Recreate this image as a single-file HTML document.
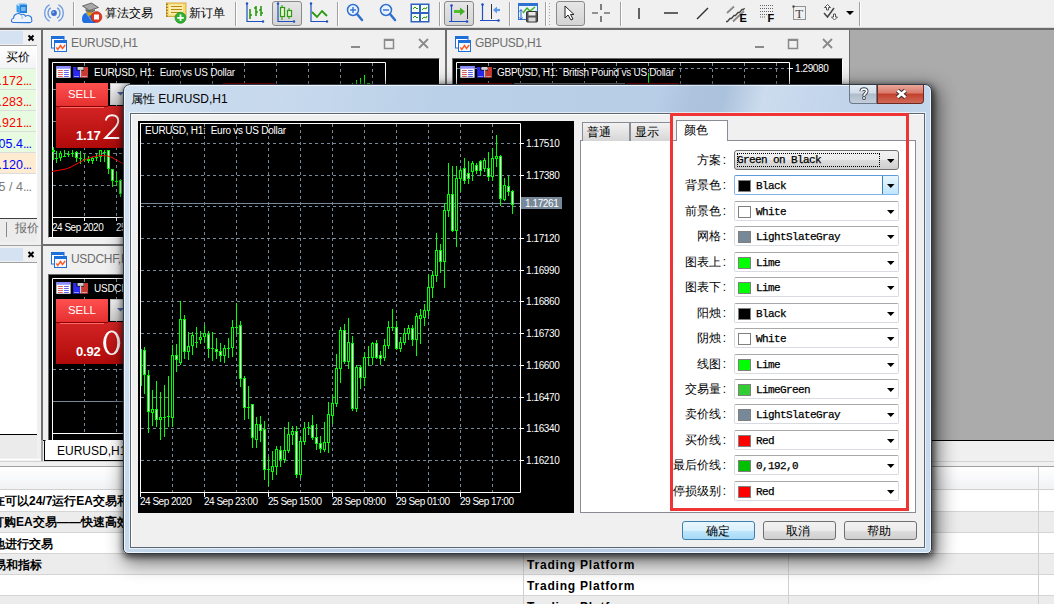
<!DOCTYPE html><html><head><meta charset="utf-8"><style>
*{margin:0;padding:0;box-sizing:border-box}
html,body{width:1054px;height:604px;overflow:hidden;background:#f0f0f0;font-family:"Liberation Sans",sans-serif;font-size:12px;color:#000;position:relative}
.a{position:absolute}
.t{white-space:nowrap;line-height:1}
svg{position:absolute;overflow:visible}
.mono{font-family:"Liberation Mono",monospace}
</style></head><body>
<div class="a" style="left:0px;top:0px;width:1054px;height:28px;background:#f0f0f0"></div>
<div class="a" style="left:0px;top:27px;width:1054px;height:1px;background:#d8d8d8"></div>
<div class="a" style="left:0px;top:28px;width:1054px;height:2px;background:#6b6b6b"></div>
<div class="a" style="left:73px;top:2px;width:1px;height:24px;background:#a0a0a0"></div>
<div class="a" style="left:74px;top:2px;width:1px;height:24px;background:#ffffff"></div>
<div class="a" style="left:235px;top:2px;width:1px;height:24px;background:#a0a0a0"></div>
<div class="a" style="left:236px;top:2px;width:1px;height:24px;background:#ffffff"></div>
<div class="a" style="left:337px;top:2px;width:1px;height:24px;background:#a0a0a0"></div>
<div class="a" style="left:338px;top:2px;width:1px;height:24px;background:#ffffff"></div>
<div class="a" style="left:439px;top:2px;width:1px;height:24px;background:#a0a0a0"></div>
<div class="a" style="left:440px;top:2px;width:1px;height:24px;background:#ffffff"></div>
<div class="a" style="left:509px;top:2px;width:1px;height:24px;background:#a0a0a0"></div>
<div class="a" style="left:510px;top:2px;width:1px;height:24px;background:#ffffff"></div>
<div class="a" style="left:620px;top:2px;width:1px;height:24px;background:#a0a0a0"></div>
<div class="a" style="left:621px;top:2px;width:1px;height:24px;background:#ffffff"></div>
<div class="a" style="left:859px;top:2px;width:1px;height:24px;background:#a0a0a0"></div>
<div class="a" style="left:860px;top:2px;width:1px;height:24px;background:#ffffff"></div>
<div class="a" style="left:545px;top:2px;width:1px;height:24px;background:#a0a0a0"></div>
<div class="a" style="left:546px;top:2px;width:1px;height:24px;background:#ffffff"></div>
<div class="a" style="left:549px;top:3px;width:1px;height:22px;background:repeating-linear-gradient(#a8a8a8 0 1px,transparent 1px 3px)"></div>
<div class="a" style="left:272px;top:1px;width:30px;height:25px;border:1px solid #8a8a8a;border-radius:3px;background:linear-gradient(#e6e6e6,#d4d4d4)"></div>
<div class="a" style="left:444px;top:1px;width:30px;height:25px;border:1px solid #8a8a8a;border-radius:3px;background:linear-gradient(#e6e6e6,#d4d4d4)"></div>
<div class="a" style="left:556px;top:1px;width:29px;height:25px;border:1px solid #8a8a8a;border-radius:3px;background:linear-gradient(#e6e6e6,#d4d4d4)"></div>
<svg class="a" style="left:0;top:0" width="1054" height="28" viewBox="0 0 1054 28"><path d="M16.5 4.5 L19 3.2 L27 3.2 L24.5 4.5 Z" fill="#8ccaf8"/><path d="M16.5 4.5 L19.5 6.5 L19.5 13 L16.5 12 Z" fill="#3aa0f0"/><rect x="19.5" y="4.5" width="7.5" height="8.5" fill="#1f80e0"/><path d="M21 8h4.5M21 10h4.5" stroke="#d8f0ff" stroke-width="1"/><path d="M13.5 22.5 C10.5 22.5 10.8 18.6 13.6 18.2 C13.4 13.8 18.6 12.4 21 14.6 C22.6 13.6 25 14.6 25.4 16.2 C28.2 14.6 32.2 16.4 31.6 19.6 C32.6 21.4 31.2 22.6 29.6 22.6 Z" fill="#eef4fc" stroke="#2d78d8" stroke-width="1.1"/><path d="M21 14.6 C22 15.5 22.5 17 22 19" fill="none" stroke="#7aa8e0" stroke-width="0.8"/><path d="M58.37 21.21 A9.3 9.3 0 0 0 58.37 4.79 M49.63 4.79 A9.3 9.3 0 0 0 49.63 21.21 M57.18 18.09 A6.0 6.0 0 0 0 57.18 7.91 M50.82 7.91 A6.0 6.0 0 0 0 50.82 18.09 " fill="none" stroke="#6b9ae0" stroke-width="1.3"/><circle cx="54" cy="13" r="2.9" fill="#3a6fd0"/><circle cx="53.3" cy="12.3" r="1" fill="#9cc0f0"/><path d="M82 19 C82 14 85 12.5 88 12.5 L92 13 C95 14 96 18 95.5 23 L84 23 C82.5 22.5 82 21 82 19Z" fill="#1f6fe0"/><path d="M86 13 L92 21" stroke="#6a98d8" stroke-width="1.2"/><path d="M86 10 L93 10 L92 15 L88 16 Z" fill="#d4a818"/><path d="M85.5 8.5 Q90 12.5 95 9 L95 11 Q90 14 85.5 11 Z" fill="#707070"/><path d="M82.5 6 L91.5 3 L98.5 7.5 L89.5 10.5 Z" fill="#a8a8a8" stroke="#505050" stroke-width="0.8"/><circle cx="96.5" cy="17" r="5.4" fill="#e0381c"/><circle cx="96.5" cy="17" r="5.4" fill="none" stroke="#b02010" stroke-width="0.6"/><rect x="94" y="14.5" width="5" height="5" fill="#fff"/><rect x="166.5" y="3" width="19.5" height="13.5" fill="#f8dc78" stroke="#d0a020" stroke-width="0.8"/><rect x="169" y="4.5" width="14" height="10" fill="#fcecb0"/><path d="M171 6.5h11M171 9.5h11M171 12.5h8" stroke="#b88a10" stroke-width="1.2"/><path d="M166 4.3h2M166 7.3h2M166 10.3h2M166 13.3h2M166 16h2" stroke="#8a6a10" stroke-width="1.1"/><circle cx="180.5" cy="17.8" r="5.5" fill="#30b030"/><circle cx="180.5" cy="17.8" r="5.5" fill="none" stroke="#1a8a1a" stroke-width="0.7"/><path d="M177.2 17.8h6.6M180.5 14.5v6.6" stroke="#fff" stroke-width="1.8"/><path d="M247 3 V21.5 H263" fill="none" stroke="#1f4fc0" stroke-width="1.2"/><circle cx="247" cy="3.5" r="1.2" fill="#1f4fc0"/><circle cx="263" cy="21.5" r="1.2" fill="#1f4fc0"/><path d="M250 9v10M250 15h2M256 6v10M254 8h2M256 12h2M261 6v10M259 10h2M261 13h2" stroke="#2a9a10" stroke-width="1.6" fill="none"/><path d="M278 3 V21.5 H294" fill="none" stroke="#1f4fc0" stroke-width="1.2"/><circle cx="278" cy="3.5" r="1.2" fill="#1f4fc0"/><circle cx="294" cy="21.5" r="1.2" fill="#1f4fc0"/><path d="M282 5v15M289 8v11" stroke="#2a9a10" stroke-width="1"/><rect x="280.5" y="7.5" width="4" height="9" fill="#e8f5d0" stroke="#2a9a10" stroke-width="1.2"/><rect x="287.5" y="10.5" width="4" height="6" fill="#e8f5d0" stroke="#2a9a10" stroke-width="1.2"/><path d="M311 3 V21.5 H327" fill="none" stroke="#1f4fc0" stroke-width="1.2"/><circle cx="311" cy="3.5" r="1.2" fill="#1f4fc0"/><circle cx="327" cy="21.5" r="1.2" fill="#1f4fc0"/><path d="M312 12 L317 17 L322 11 L327 16" fill="none" stroke="#2a9a10" stroke-width="1.8"/><circle cx="353" cy="10" r="5.5" fill="#eaf3ff" stroke="#2f6fd0" stroke-width="1.5"/><path d="M357 14 L362 20" stroke="#2f6fd0" stroke-width="2.5" stroke-linecap="round"/><path d="M350 10h6" stroke="#2f6fd0" stroke-width="1.4"/><path d="M353 7v6" stroke="#2f6fd0" stroke-width="1.4"/><circle cx="386" cy="10" r="5.5" fill="#eaf3ff" stroke="#2f6fd0" stroke-width="1.5"/><path d="M390 14 L395 20" stroke="#2f6fd0" stroke-width="2.5" stroke-linecap="round"/><path d="M383 10h6" stroke="#2f6fd0" stroke-width="1.4"/><rect x="410.5" y="3.5" width="19" height="19" fill="#2f62c0"/><rect x="412" y="5" width="7" height="7" fill="#f4fff0"/><rect x="421" y="5" width="7" height="7" fill="#f4fff0"/><rect x="412" y="14" width="7" height="7" fill="#f4fff0"/><rect x="421" y="14" width="7" height="7" fill="#f4fff0"/><path d="M413 9l2-2 2 2 1-1M422 10l2-2 2 1 1-2M413 18l2-2 2 2 1-1M422 19l2-2 2 1 1-2" stroke="#2a9a10" fill="none" stroke-width="1"/><path d="M451.5 5.5V22M449 21.5H467" stroke="#1f4fc0" stroke-width="1.2"/><circle cx="451.5" cy="5.5" r="1.3" fill="#1f4fc0"/><circle cx="467" cy="21.5" r="1.3" fill="#1f4fc0"/><path d="M467.5 5V19" stroke="#333" stroke-width="1"/><path d="M454 11.5h7" stroke="#50c030" stroke-width="3"/><path d="M460 7.5 L465 11.5 L460 15.5 Z" fill="#40b020"/><path d="M482.5 4.5V21M480 20.5H499" stroke="#1f4fc0" stroke-width="1.2"/><circle cx="482.5" cy="4.5" r="1.3" fill="#1f4fc0"/><circle cx="498.5" cy="20.5" r="1.3" fill="#1f4fc0"/><path d="M491.5 4V19" stroke="#333" stroke-width="1"/><path d="M495 10h5" stroke="#5a9ae8" stroke-width="2.2"/><path d="M497 6.5 L493 10 L497 13.5 Z" fill="#5a9ae8"/><rect x="518.5" y="3.5" width="19" height="16" fill="#eaf4ff" stroke="#2f72d0" stroke-width="1"/><rect x="518.5" y="3.5" width="19" height="2.5" fill="#2f72d0"/><path d="M521 10v9M519.5 11.5l1.5-2 1.5 2M519.5 17.5l1.5 2 1.5-2" stroke="#2f62c0" fill="none" stroke-width="1"/><path d="M523 13 l4-5 3 3 5-4" stroke="#40b020" fill="none" stroke-width="1.5"/><rect x="526.5" y="11.5" width="11" height="10.5" rx="1" fill="#555" stroke="#333" stroke-width="1"/><rect x="528.5" y="12" width="7" height="3.5" fill="#e8e8e8"/><rect x="528.5" y="17.5" width="7" height="4" fill="#d8d8d8"/><path d="M565 6 L565 18 L568 15 L571 20 L573 19 L570.5 14.5 L574 14.5 Z" fill="#fff" stroke="#222" stroke-width="1"/><path d="M601 4v6M601 16v6M592 13h6M604 13h6" stroke="#333" stroke-width="1.2"/><path d="M639 8v11" stroke="#333" stroke-width="1.5"/><path d="M664 13h14" stroke="#333" stroke-width="1.5"/><path d="M697 19 L708 8" stroke="#333" stroke-width="1.5"/><path d="M726 21.5 h1.5 l2.5-3 h1.5 l2.5-3 h1.5 l2.5-3 h1.5 l2.5-3 h1.5 l1-1.5" fill="none" stroke="#444" stroke-width="1.3"/><path d="M727 13 L734 6.5 M733 21.5 L744 11" stroke="#8a8a8a" stroke-width="1.8"/><text x="739.5" y="22" font-family="Liberation Sans" font-weight="bold" font-size="11" fill="#000">E</text><path d="M760 5.5h13M760 8.5h13M760 11.5h13M760 14.5h13" stroke="#666" stroke-width="1" stroke-dasharray="1 1"/><path d="M760 17h6" stroke="#666" stroke-width="1" stroke-dasharray="1 1"/><text x="767.5" y="22" font-family="Liberation Sans" font-weight="bold" font-size="11" fill="#000">F</text><rect x="793.5" y="6.5" width="12" height="13" fill="none" stroke="#333" stroke-dasharray="1 1"/><rect x="792.5" y="5.5" width="2" height="2" fill="#333"/><text x="795.3" y="18" font-family="Liberation Serif" font-size="13" fill="#444">T</text><path d="M824 13 l3.5 4 L834 8" stroke="#444" fill="none" stroke-width="1.5"/><path d="M826.5 10 v-2.5 h-2 l3-3 3 3 h-2 v2.5z" fill="#fff" stroke="#444" stroke-width="0.9"/><path d="M833.5 14 v3 h-2 l3 3 3-3 h-2 v-3z" fill="#fff" stroke="#444" stroke-width="0.9"/><path d="M846 11 h8 l-4 4z" fill="#000"/></svg>
<div class="a t" style="left:105px;top:7px;font-size:12px;font-weight:500">算法交易</div>
<div class="a t" style="left:189px;top:7px;font-size:12px;font-weight:500">新订单</div>
<div class="a" style="left:0px;top:30px;width:41px;height:431px;background:#f0f0f0"></div>
<div class="a" style="left:41px;top:30px;width:2px;height:410px;background:#6e6e6e"></div>
<div class="a" style="left:0px;top:31px;width:23px;height:13px;background:#d4e2f1"></div>
<svg class="a" style="left:0;top:0" width="41" height="300"><path d="M28.5 35.5 L33.5 40.5 M33.5 35.5 L28.5 40.5" stroke="#000" stroke-width="2"/></svg>
<div class="a" style="left:0px;top:45px;width:37px;height:1px;background:#a0a0a0"></div>
<div class="a" style="left:0px;top:46px;width:37px;height:172px;background:#fff"></div>
<div class="a" style="left:0px;top:46px;width:36px;height:23px;background:linear-gradient(#ffffff,#f3f4f6);border-bottom:1px solid #e3e3e3"></div>
<div class="a t" style="left:6px;top:51px;font-size:12px">买价</div>
<div class="a" style="left:0px;top:69px;width:36px;height:21px;background:#e6fbe0;border-bottom:1px solid #dcdcdc"></div>
<div class="a t" style="right:1022.5px;top:75px;color:#ff0000;font-size:12.5px">1.172<span style="letter-spacing:-0.6px">...</span></div>
<div class="a" style="left:0px;top:90px;width:36px;height:21px;background:#e6fbe0;border-bottom:1px solid #dcdcdc"></div>
<div class="a t" style="right:1022.5px;top:96px;color:#ff0000;font-size:12.5px">1.283<span style="letter-spacing:-0.6px">...</span></div>
<div class="a" style="left:0px;top:111px;width:36px;height:21px;background:#e6fbe0;border-bottom:1px solid #dcdcdc"></div>
<div class="a t" style="right:1022.5px;top:117px;color:#ff0000;font-size:12.5px">0.921<span style="letter-spacing:-0.6px">...</span></div>
<div class="a" style="left:0px;top:132px;width:36px;height:21px;background:#e6fbe0;border-bottom:1px solid #dcdcdc"></div>
<div class="a t" style="right:1022.5px;top:138px;color:#0000ff;font-size:12.5px">105.4<span style="letter-spacing:-0.6px">...</span></div>
<div class="a" style="left:0px;top:153px;width:36px;height:21px;background:#fdebd2;border-bottom:1px solid #dcdcdc"></div>
<div class="a t" style="right:1022.5px;top:159px;color:#0000ff;font-size:12.5px">1.120<span style="letter-spacing:-0.6px">...</span></div>
<div class="a" style="left:0px;top:175px;width:36px;height:21px;background:#ffffff;"></div>
<div class="a t" style="right:1022.5px;top:181px;color:#7a7a7a;font-size:12.5px">5 / 4<span style="letter-spacing:-0.6px">...</span></div>
<div class="a" style="left:0px;top:218px;width:37px;height:1px;background:#404040"></div>
<div class="a" style="left:0px;top:219px;width:37px;height:23px;background:#ececec"></div>
<div class="a" style="left:6px;top:222px;width:1px;height:15px;background:#8a8a8a"></div>
<div class="a t" style="left:15px;top:222px;font-size:12px;color:#6a6a6a">报价</div>
<div class="a" style="left:0px;top:245px;width:41px;height:1px;background:#a0a0a0"></div>
<div class="a" style="left:0px;top:248px;width:23px;height:13px;background:#d4e2f1"></div>
<svg class="a" style="left:0;top:0" width="41" height="300"><path d="M28.5 252 L33.5 257 M33.5 252 L28.5 257" stroke="#000" stroke-width="2"/></svg>
<div class="a" style="left:0px;top:262px;width:37px;height:1px;background:#a0a0a0"></div>
<div class="a" style="left:0px;top:263px;width:37px;height:171px;background:#fff"></div>
<div class="a" style="left:0px;top:434px;width:37px;height:1px;background:#000"></div>
<div class="a" style="left:0px;top:435px;width:37px;height:23px;background:#ebebeb"></div>
<div class="a" style="left:0px;top:461px;width:43px;height:1px;background:#a0a0a0"></div>
<div class="a" style="left:43px;top:30px;width:1011px;height:410px;background:#ababab"></div>
<div class="a" style="left:43px;top:440px;width:1011px;height:1px;background:#000"></div>
<div class="a" style="left:43px;top:30px;width:402px;height:214px;background:#f0f0f0"></div>
<svg class="a" style="left:51px;top:36px" width="17" height="17" viewBox="0 0 17 17"><rect x="0.5" y="0.5" width="12.5" height="11.5" fill="#fff" stroke="#1e6fd9"/><rect x="0.5" y="0.5" width="12.5" height="2.5" fill="#1e6fd9"/><rect x="3.5" y="4.5" width="12" height="11" fill="#f4f8ff" stroke="#1e6fd9"/><rect x="3.5" y="4.5" width="12" height="2.5" fill="#1e6fd9"/><path d="M5.3 11.3 L6.8 13.5 L9.5 9.5 L11.5 12.5 L14.2 9" stroke="#ff5a1e" stroke-width="1.4" fill="none"/></svg>
<div class="a t" style="left:71px;top:37px;font-size:12px;color:#6d6d6d;letter-spacing:-0.3px">EURUSD,H1</div>
<svg class="a" style="left:345px;top:30px" width="100" height="28"><path d="M6 17h9" stroke="#8a8a8a" stroke-width="2"/><rect x="39.5" y="9.5" width="9" height="9" fill="none" stroke="#8a8a8a" stroke-width="1.5"/><path d="M39 10h10" stroke="#8a8a8a" stroke-width="2"/><path d="M74 9 L83 18 M83 9 L74 18" stroke="#8a8a8a" stroke-width="1.8"/></svg>
<div class="a" style="left:445px;top:30px;width:2px;height:216px;background:#6e6e6e"></div>
<div class="a" style="left:43px;top:244px;width:404px;height:2px;background:#6e6e6e"></div>
<div class="a" style="left:48px;top:58px;width:392px;height:180px;background:#000;border-top:1px solid #6a6a6a;border-left:1px solid #6a6a6a;border-right:1px solid #fff;border-bottom:1px solid #fff"></div>
<div class="a" style="left:447px;top:30px;width:402px;height:410px;background:#f0f0f0"></div>
<svg class="a" style="left:455px;top:36px" width="17" height="17" viewBox="0 0 17 17"><rect x="0.5" y="0.5" width="12.5" height="11.5" fill="#fff" stroke="#1e6fd9"/><rect x="0.5" y="0.5" width="12.5" height="2.5" fill="#1e6fd9"/><rect x="3.5" y="4.5" width="12" height="11" fill="#f4f8ff" stroke="#1e6fd9"/><rect x="3.5" y="4.5" width="12" height="2.5" fill="#1e6fd9"/><path d="M5.3 11.3 L6.8 13.5 L9.5 9.5 L11.5 12.5 L14.2 9" stroke="#ff5a1e" stroke-width="1.4" fill="none"/></svg>
<div class="a t" style="left:475px;top:37px;font-size:12px;color:#6d6d6d;letter-spacing:-0.3px">GBPUSD,H1</div>
<svg class="a" style="left:749px;top:30px" width="100" height="28"><path d="M6 17h9" stroke="#8a8a8a" stroke-width="2"/><rect x="39.5" y="9.5" width="9" height="9" fill="none" stroke="#8a8a8a" stroke-width="1.5"/><path d="M39 10h10" stroke="#8a8a8a" stroke-width="2"/><path d="M74 9 L83 18 M83 9 L74 18" stroke="#8a8a8a" stroke-width="1.8"/></svg>
<div class="a" style="left:849px;top:30px;width:1px;height:410px;background:#6e6e6e"></div>
<div class="a" style="left:452px;top:58px;width:391px;height:382px;background:#000;border-top:1px solid #6a6a6a;border-left:1px solid #6a6a6a;border-right:1px solid #fff"></div>
<div class="a" style="left:43px;top:246px;width:402px;height:194px;background:#f0f0f0"></div>
<svg class="a" style="left:51px;top:252px" width="17" height="17" viewBox="0 0 17 17"><rect x="0.5" y="0.5" width="12.5" height="11.5" fill="#fff" stroke="#1e6fd9"/><rect x="0.5" y="0.5" width="12.5" height="2.5" fill="#1e6fd9"/><rect x="3.5" y="4.5" width="12" height="11" fill="#f4f8ff" stroke="#1e6fd9"/><rect x="3.5" y="4.5" width="12" height="2.5" fill="#1e6fd9"/><path d="M5.3 11.3 L6.8 13.5 L9.5 9.5 L11.5 12.5 L14.2 9" stroke="#ff5a1e" stroke-width="1.4" fill="none"/></svg>
<div class="a t" style="left:71px;top:253px;font-size:12px;color:#6d6d6d;letter-spacing:-0.3px">USDCHF,H1</div>
<div class="a" style="left:48px;top:274px;width:392px;height:166px;background:#000;border-top:1px solid #6a6a6a;border-left:1px solid #6a6a6a"></div>
<svg class="a" style="left:0;top:0" width="1054" height="604"><path d="M52.5 237 V62.5 H385.5 V217.5 H52.5" fill="none" stroke="#fff" stroke-width="1"/><path d="M84.5 63V217" stroke="#778899" stroke-width="1" stroke-dasharray="3 3"/><path d="M116.5 63V217" stroke="#778899" stroke-width="1" stroke-dasharray="3 3"/><path d="M148.5 63V217" stroke="#778899" stroke-width="1" stroke-dasharray="3 3"/><path d="M180.5 63V217" stroke="#778899" stroke-width="1" stroke-dasharray="3 3"/><path d="M212.5 63V217" stroke="#778899" stroke-width="1" stroke-dasharray="3 3"/><path d="M244.5 63V217" stroke="#778899" stroke-width="1" stroke-dasharray="3 3"/><path d="M276.5 63V217" stroke="#778899" stroke-width="1" stroke-dasharray="3 3"/><path d="M308.5 63V217" stroke="#778899" stroke-width="1" stroke-dasharray="3 3"/><path d="M340.5 63V217" stroke="#778899" stroke-width="1" stroke-dasharray="3 3"/><path d="M372.5 63V217" stroke="#778899" stroke-width="1" stroke-dasharray="3 3"/><path d="M53 89.5H385" stroke="#778899" stroke-width="1" stroke-dasharray="3 3"/><path d="M53 121.5H385" stroke="#778899" stroke-width="1" stroke-dasharray="3 3"/><path d="M53 153.5H385" stroke="#778899" stroke-width="1" stroke-dasharray="3 3"/><path d="M53 185.5H385" stroke="#778899" stroke-width="1" stroke-dasharray="3 3"/><path d="M53.5 147V160" stroke="#00ff00" stroke-width="1"/><rect x="52.5" y="150.5" width="2" height="1" fill="#fff" stroke="#00ff00" stroke-width="1"/><path d="M56.5 151V163" stroke="#00ff00" stroke-width="1"/><path d="M55.0 158.5H58.0" stroke="#00ff00" stroke-width="1"/><path d="M60.5 151V161" stroke="#00ff00" stroke-width="1"/><rect x="59.5" y="153.5" width="2" height="4" fill="#000" stroke="#00ff00" stroke-width="1"/><path d="M64.5 150V157" stroke="#00ff00" stroke-width="1"/><path d="M63.0 156.5H66.0" stroke="#00ff00" stroke-width="1"/><path d="M68.5 151V157" stroke="#00ff00" stroke-width="1"/><path d="M67.0 154.5H70.0" stroke="#00ff00" stroke-width="1"/><path d="M72.5 150V157" stroke="#00ff00" stroke-width="1"/><path d="M71.0 153.5H74.0" stroke="#00ff00" stroke-width="1"/><path d="M76.5 151V162" stroke="#00ff00" stroke-width="1"/><rect x="75.5" y="152.5" width="2" height="5" fill="#fff" stroke="#00ff00" stroke-width="1"/><path d="M80.5 151V164" stroke="#00ff00" stroke-width="1"/><path d="M79.0 158.5H82.0" stroke="#00ff00" stroke-width="1"/><path d="M84.5 154V162" stroke="#00ff00" stroke-width="1"/><path d="M83.0 159.5H86.0" stroke="#00ff00" stroke-width="1"/><path d="M88.5 156V163" stroke="#00ff00" stroke-width="1"/><rect x="87.5" y="159.5" width="2" height="1" fill="#fff" stroke="#00ff00" stroke-width="1"/><path d="M92.5 157V164" stroke="#00ff00" stroke-width="1"/><rect x="91.5" y="158.5" width="2" height="2" fill="#000" stroke="#00ff00" stroke-width="1"/><path d="M96.5 154V161" stroke="#00ff00" stroke-width="1"/><path d="M95.0 157.5H98.0" stroke="#00ff00" stroke-width="1"/><path d="M100.5 150V162" stroke="#00ff00" stroke-width="1"/><rect x="99.5" y="150.5" width="2" height="6" fill="#000" stroke="#00ff00" stroke-width="1"/><path d="M104.5 150V162" stroke="#00ff00" stroke-width="1"/><path d="M103.0 152.5H106.0" stroke="#00ff00" stroke-width="1"/><path d="M108.5 150V174" stroke="#00ff00" stroke-width="1"/><rect x="107.5" y="150.5" width="2" height="18" fill="#fff" stroke="#00ff00" stroke-width="1"/><path d="M112.5 169V187" stroke="#00ff00" stroke-width="1"/><rect x="111.5" y="169.5" width="2" height="11" fill="#fff" stroke="#00ff00" stroke-width="1"/><path d="M116.5 172V186" stroke="#00ff00" stroke-width="1"/><path d="M115.0 181.5H118.0" stroke="#00ff00" stroke-width="1"/><path d="M120.5 179V197" stroke="#00ff00" stroke-width="1"/><rect x="119.5" y="180.5" width="2" height="13" fill="#fff" stroke="#00ff00" stroke-width="1"/><path d="M52 171.5 L66 169 L71 167 L84 160 L92 157 L100 155.5 L108 156 L112 157.5 L120 162 L126 165" stroke="#ff0000" stroke-width="1" fill="none"/><path d="M352.5 83V86M356.5 80V86M360.5 78V86M364.5 75V86M367 83.5h3" stroke="#00ff00"/><text x="52" y="231" font-family="Liberation Sans" font-size="10" letter-spacing="-0.5" fill="#fff">24 Sep 2020</text><text x="116" y="231" font-family="Liberation Sans" font-size="10" letter-spacing="-0.5" fill="#fff">25</text><path d="M84.5 217V221M116.5 217V221" stroke="#fff"/><path d="M456.5 440 V62.5 H789.5 V440" fill="none" stroke="#fff" stroke-width="1"/><path d="M488.5 63V90" stroke="#778899" stroke-width="1" stroke-dasharray="3 3"/><path d="M520.5 63V90" stroke="#778899" stroke-width="1" stroke-dasharray="3 3"/><path d="M552.5 63V90" stroke="#778899" stroke-width="1" stroke-dasharray="3 3"/><path d="M584.5 63V90" stroke="#778899" stroke-width="1" stroke-dasharray="3 3"/><path d="M616.5 63V90" stroke="#778899" stroke-width="1" stroke-dasharray="3 3"/><path d="M648.5 63V90" stroke="#778899" stroke-width="1" stroke-dasharray="3 3"/><path d="M680.5 63V90" stroke="#778899" stroke-width="1" stroke-dasharray="3 3"/><path d="M712.5 63V90" stroke="#778899" stroke-width="1" stroke-dasharray="3 3"/><path d="M744.5 63V90" stroke="#778899" stroke-width="1" stroke-dasharray="3 3"/><path d="M776.5 63V90" stroke="#778899" stroke-width="1" stroke-dasharray="3 3"/><path d="M457 68.5H789" stroke="#778899" stroke-width="1" stroke-dasharray="3 3"/><path d="M789 68.5h4" stroke="#fff"/><text x="795" y="72" font-family="Liberation Sans" font-size="10" letter-spacing="-0.4" fill="#fff">1.29080</text><path d="M648.5 73V86" stroke="#00ff00"/><path d="M460 83.5h52M627 83.5h52" stroke="#8a0000" stroke-width="1"/><path d="M514 83.5h111" stroke="#777" stroke-width="1"/><path d="M223 84h52" stroke="#8a0000" stroke-width="2"/><path d="M52.5 440 V278.5 H385.5 V433.5 H52.5" fill="none" stroke="#fff" stroke-width="1"/><path d="M84.5 279V433" stroke="#778899" stroke-width="1" stroke-dasharray="3 3"/><path d="M116.5 279V433" stroke="#778899" stroke-width="1" stroke-dasharray="3 3"/><path d="M53 369.5H385" stroke="#778899" stroke-width="1" stroke-dasharray="3 3"/><path d="M53 401.5H385" stroke="#778899" stroke-width="1"/></svg>
<svg class="a" style="left:56px;top:66px" width="34" height="13" viewBox="0 0 34 13"><rect x="0.3" y="0" width="14.3" height="11.8" fill="#fff"/><rect x="0.3" y="0" width="14.3" height="2.6" fill="#7070ff"/><rect x="1" y="0.6" width="12.5" height="0.9" fill="#b0b0ff"/><path d="M2 4.5h4.8M2 6.5h4.8M2 8.5h4.8M2 10.5h4.8" stroke="#e06060" stroke-width="1"/><path d="M8.1 4.5h4.7M8.1 6.5h4.7M8.1 8.5h4.7M8.1 10.5h4.7" stroke="#6060f0" stroke-width="1"/><path d="M17.1 1 H20.5 V4.5 H24 V11.8 H17.1 Z" fill="#2a2af0"/><path d="M24.7 4.5 H28 V1 H32 V11.8 H24.7 Z" fill="#c83a32"/><path d="M18 10.5h5M25.5 10.5h5.5" stroke="#e8e8ff" stroke-width="0.8" opacity="0.7"/><rect x="21.5" y="1" width="6.1" height="2.9" fill="#d0d0d0"/><rect x="24" y="3.9" width="1.2" height="7.5" fill="#c8c8c8"/></svg>
<div class="a t" style="left:94px;top:68px;font-size:10px;color:#fff;letter-spacing:-0.25px">EURUSD, H1:&nbsp; Euro vs US Dollar</div>
<svg class="a" style="left:460px;top:66px" width="34" height="13" viewBox="0 0 34 13"><rect x="0.3" y="0" width="14.3" height="11.8" fill="#fff"/><rect x="0.3" y="0" width="14.3" height="2.6" fill="#7070ff"/><rect x="1" y="0.6" width="12.5" height="0.9" fill="#b0b0ff"/><path d="M2 4.5h4.8M2 6.5h4.8M2 8.5h4.8M2 10.5h4.8" stroke="#e06060" stroke-width="1"/><path d="M8.1 4.5h4.7M8.1 6.5h4.7M8.1 8.5h4.7M8.1 10.5h4.7" stroke="#6060f0" stroke-width="1"/><path d="M17.1 1 H20.5 V4.5 H24 V11.8 H17.1 Z" fill="#2a2af0"/><path d="M24.7 4.5 H28 V1 H32 V11.8 H24.7 Z" fill="#c83a32"/><path d="M18 10.5h5M25.5 10.5h5.5" stroke="#e8e8ff" stroke-width="0.8" opacity="0.7"/><rect x="21.5" y="1" width="6.1" height="2.9" fill="#d0d0d0"/><rect x="24" y="3.9" width="1.2" height="7.5" fill="#c8c8c8"/></svg>
<div class="a t" style="left:497px;top:68px;font-size:10px;color:#fff;letter-spacing:-0.25px">GBPUSD, H1:&nbsp; British Pound vs US Dollar</div>
<svg class="a" style="left:56px;top:282px" width="34" height="13" viewBox="0 0 34 13"><rect x="0.3" y="0" width="14.3" height="11.8" fill="#fff"/><rect x="0.3" y="0" width="14.3" height="2.6" fill="#7070ff"/><rect x="1" y="0.6" width="12.5" height="0.9" fill="#b0b0ff"/><path d="M2 4.5h4.8M2 6.5h4.8M2 8.5h4.8M2 10.5h4.8" stroke="#e06060" stroke-width="1"/><path d="M8.1 4.5h4.7M8.1 6.5h4.7M8.1 8.5h4.7M8.1 10.5h4.7" stroke="#6060f0" stroke-width="1"/><path d="M17.1 1 H20.5 V4.5 H24 V11.8 H17.1 Z" fill="#2a2af0"/><path d="M24.7 4.5 H28 V1 H32 V11.8 H24.7 Z" fill="#c83a32"/><path d="M18 10.5h5M25.5 10.5h5.5" stroke="#e8e8ff" stroke-width="0.8" opacity="0.7"/><rect x="21.5" y="1" width="6.1" height="2.9" fill="#d0d0d0"/><rect x="24" y="3.9" width="1.2" height="7.5" fill="#c8c8c8"/></svg>
<div class="a t" style="left:94px;top:284px;font-size:10px;color:#fff;letter-spacing:-0.25px">USDCHF, H1:&nbsp; US Dollar vs Swiss Franc</div>
<div class="a" style="left:56px;top:106px;width:330px;height:42px;background:linear-gradient(#d42424,#b00a0a)"></div>
<div class="a" style="left:56px;top:83px;width:52px;height:23px;background:linear-gradient(#ff5050,#e63030)"></div>
<div class="a" style="left:56px;top:106px;width:52px;height:1px;background:#8a0000"></div>
<div class="a" style="left:60px;top:107px;width:44px;height:1px;background:#ff6a6a"></div>
<div class="a t" style="left:68px;top:89px;font-size:11.5px;color:#fff;letter-spacing:-0.1px">SELL</div>
<div class="a" style="left:110px;top:83px;width:20px;height:22px;background:linear-gradient(#f6f6f6,#d0d0d0);border:1px solid #c8c8c8"></div>
<svg class="a" style="left:117px;top:92px" width="8" height="5"><path d="M0 0h7l-3.5 3.5z" fill="#5068a8"/></svg>
<div class="a t" style="left:76px;top:129px;font-size:13px;font-weight:bold;color:#fff;letter-spacing:-0.2px">1.17</div>
<svg class="a" style="left:0;top:0px" width="130" height="150"><path d="M105.8 120.5 C106.5 116.5 109 115.2 112 115.2 C116 115.2 118.3 117.6 118.3 121 C118.3 124.5 116 127 112.5 130.5 L105.2 138 H119.3" fill="none" stroke="#fff" stroke-width="1.9"/></svg>
<div class="a" style="left:56px;top:322px;width:330px;height:42px;background:linear-gradient(#d42424,#b00a0a)"></div>
<div class="a" style="left:56px;top:299px;width:52px;height:23px;background:linear-gradient(#ff5050,#e63030)"></div>
<div class="a" style="left:56px;top:322px;width:52px;height:1px;background:#8a0000"></div>
<div class="a" style="left:60px;top:323px;width:44px;height:1px;background:#ff6a6a"></div>
<div class="a t" style="left:68px;top:305px;font-size:11.5px;color:#fff;letter-spacing:-0.1px">SELL</div>
<div class="a" style="left:110px;top:299px;width:20px;height:22px;background:linear-gradient(#f6f6f6,#d0d0d0);border:1px solid #c8c8c8"></div>
<svg class="a" style="left:117px;top:308px" width="8" height="5"><path d="M0 0h7l-3.5 3.5z" fill="#5068a8"/></svg>
<div class="a t" style="left:76px;top:345px;font-size:13px;font-weight:bold;color:#fff;letter-spacing:-0.2px">0.92</div>
<svg class="a" style="left:0;top:216px" width="130" height="150"><path d="M103.10000000000001 126.8 A8.6 12.2 0 1 0 120.3 126.8 A8.6 12.2 0 1 0 103.10000000000001 126.8 Z M106.10000000000001 126.8 A5.6 10.6 0 1 0 117.3 126.8 A5.6 10.6 0 1 0 106.10000000000001 126.8 Z" fill="#fff" fill-rule="evenodd"/></svg>
<div class="a" style="left:43px;top:441px;width:1011px;height:20px;background:#f0f0f0"></div>
<div class="a" style="left:44px;top:440px;width:100px;height:21px;background:#fff;border-left:1px solid #000;border-bottom:1px solid #000;border-top-left-radius:2px"></div>
<div class="a t" style="left:57px;top:445px;font-size:12px">EURUSD,H1</div>
<div class="a" style="left:0px;top:461px;width:1054px;height:1px;background:#d4d4d4"></div>
<div class="a" style="left:0px;top:462px;width:1054px;height:4px;background:#f0f0f0"></div>
<div class="a" style="left:0px;top:466px;width:1054px;height:1px;background:#a0a0a0"></div>
<div class="a" style="left:0px;top:467px;width:1054px;height:22px;background:linear-gradient(#ffffff,#f1f2f4)"></div>
<div class="a" style="left:0px;top:489px;width:1054px;height:1px;background:#d0d0d0"></div>
<div class="a" style="left:0px;top:490px;width:1054px;height:21px;background:#ffffff"></div>
<div class="a" style="left:0px;top:511px;width:1054px;height:1px;background:#d4d4d4"></div>
<div class="a" style="left:0px;top:512px;width:1054px;height:20px;background:#ececec"></div>
<div class="a" style="left:0px;top:532px;width:1054px;height:1px;background:#d4d4d4"></div>
<div class="a" style="left:0px;top:533px;width:1054px;height:20px;background:#ffffff"></div>
<div class="a" style="left:0px;top:553px;width:1054px;height:1px;background:#d4d4d4"></div>
<div class="a" style="left:0px;top:554px;width:1054px;height:20px;background:#ececec"></div>
<div class="a" style="left:0px;top:574px;width:1054px;height:1px;background:#d4d4d4"></div>
<div class="a" style="left:0px;top:575px;width:1054px;height:20px;background:#ffffff"></div>
<div class="a" style="left:0px;top:595px;width:1054px;height:1px;background:#d4d4d4"></div>
<div class="a" style="left:0px;top:596px;width:1054px;height:20px;background:#ececec"></div>
<div class="a" style="left:0px;top:616px;width:1054px;height:1px;background:#d4d4d4"></div>
<div class="a" style="left:0px;top:617px;width:1054px;height:-13px;background:#ececec"></div>
<div class="a" style="left:523px;top:467px;width:1px;height:137px;background:#d0d0d0"></div>
<div class="a" style="left:788px;top:467px;width:1px;height:137px;background:#d0d0d0"></div>
<div class="a" style="left:1038px;top:467px;width:1px;height:137px;background:#d0d0d0"></div>
<div class="a t" style="left:-7px;top:495px;font-size:12px;font-weight:bold">在可以24/7运行EA交易和指标</div>
<div class="a t" style="left:-8px;top:516px;font-size:12px;font-weight:bold">打购EA交易——快速高效</div>
<div class="a t" style="left:-7px;top:538px;font-size:12px;font-weight:bold">地进行交易</div>
<div class="a t" style="left:-6px;top:559px;font-size:12px;font-weight:bold">易和指标</div>
<div class="a t" style="left:527px;top:559px;font-size:12px;font-weight:bold;letter-spacing:0.8px">Trading Platform</div>
<div class="a t" style="left:527px;top:580px;font-size:12px;font-weight:bold;letter-spacing:0.8px">Trading Platform</div>
<div class="a t" style="left:527px;top:601px;font-size:12px;font-weight:bold;letter-spacing:0.8px">Trading Platform</div>
<div class="a" style="left:41px;top:440px;width:2px;height:21px;background:#a8a8a8"></div>
<div class="a" style="left:0px;top:459px;width:41px;height:1px;background:#fff"></div>
<div class="a" style="left:123px;top:84px;width:809px;height:470px;border-radius:7px 7px 5px 5px;box-shadow:1px 2px 6px 1px rgba(0,0,0,0.6),4px 6px 18px 4px rgba(0,0,0,0.45)"></div>
<div class="a" style="left:123px;top:84px;width:809px;height:470px;border:1px solid #2f3a46;border-radius:7px 7px 5px 5px;box-shadow:inset 0 0 0 1px rgba(255,255,255,0.75);background:linear-gradient(100deg,#d4e3f2 0%,#c2d6eb 12%,#bad0e8 35%,#b8cee7 60%,#bfd3ea 85%,#c8dbef 100%)"></div>
<div class="a" style="left:124px;top:85px;width:807px;height:28px;border-radius:6px 6px 0 0;background:linear-gradient(105deg,transparent 0%,rgba(255,255,255,0.12) 20%,transparent 40%,transparent 66%,rgba(70,100,140,0.10) 70%,rgba(70,100,140,0.13) 74%,rgba(255,255,255,0.25) 79%,rgba(255,255,255,0.1) 86%,transparent 92%)"></div>
<div class="a" style="left:129px;top:112px;width:797px;height:437px;border:1px solid rgba(255,255,255,0.6)"></div>
<div class="a" style="left:130px;top:113px;width:795px;height:435px;background:#f0f0f0;border:1px solid #5c6670;box-shadow:inset 1px 1px 0 #fff"></div>
<div class="a t" style="left:131px;top:93px;font-size:12px;color:#000">属性 EURUSD,H1</div>
<div class="a" style="left:849px;top:85px;width:28px;height:19px;border:1px solid #6b7a8a;border-top:none;border-radius:0 0 0 4px;background:linear-gradient(#e4ebf3 0%,#d2dce8 45%,#aebbc9 50%,#c3cfdb 100%)"></div>
<div class="a" style="left:877px;top:85px;width:47px;height:19px;border:1px solid #6b2a22;border-top:none;border-radius:0 0 4px 0;background:linear-gradient(#eaa89c 0%,#d8786a 45%,#c2402c 50%,#d06a58 100%)"></div>
<svg class="a" style="left:0;top:0" width="1054" height="120"><path d="M861.3 91.3 C861.3 88.3 866.7 88.3 866.7 91.3 C866.7 93.6 864 93.6 864 95.8" fill="none" stroke="#3a4452" stroke-width="3.6"/><circle cx="864" cy="98" r="1.9" fill="#3a4452"/><path d="M861.3 91.3 C861.3 88.3 866.7 88.3 866.7 91.3 C866.7 93.6 864 93.6 864 95.8" fill="none" stroke="#fff" stroke-width="1.8"/><circle cx="864" cy="98" r="1" fill="#fff"/><path d="M897.5 90.5 L905.5 97.3 M905.5 90.5 L897.5 97.3" stroke="#3b2a2a" stroke-width="4.6"/><path d="M897.5 90.5 L905.5 97.3 M905.5 90.5 L897.5 97.3" stroke="#fff" stroke-width="2.8"/></svg>
<div class="a" style="left:138px;top:121px;width:436px;height:392px;background:#000"></div>
<svg class="a" style="left:0;top:0" width="1054" height="604"><path d="M141 143.5H520" stroke="#778899" stroke-dasharray="3 3"/><path d="M141 175.5H520" stroke="#778899" stroke-dasharray="3 3"/><path d="M141 206.5H520" stroke="#778899" stroke-dasharray="3 3"/><path d="M141 238.5H520" stroke="#778899" stroke-dasharray="3 3"/><path d="M141 270.5H520" stroke="#778899" stroke-dasharray="3 3"/><path d="M141 301.5H520" stroke="#778899" stroke-dasharray="3 3"/><path d="M141 333.5H520" stroke="#778899" stroke-dasharray="3 3"/><path d="M141 365.5H520" stroke="#778899" stroke-dasharray="3 3"/><path d="M141 397.5H520" stroke="#778899" stroke-dasharray="3 3"/><path d="M141 428.5H520" stroke="#778899" stroke-dasharray="3 3"/><path d="M141 460.5H520" stroke="#778899" stroke-dasharray="3 3"/><path d="M172.5 124V492" stroke="#778899" stroke-dasharray="3 3"/><path d="M204.5 124V492" stroke="#778899" stroke-dasharray="3 3"/><path d="M236.5 124V492" stroke="#778899" stroke-dasharray="3 3"/><path d="M268.5 124V492" stroke="#778899" stroke-dasharray="3 3"/><path d="M300.5 124V492" stroke="#778899" stroke-dasharray="3 3"/><path d="M332.5 124V492" stroke="#778899" stroke-dasharray="3 3"/><path d="M364.5 124V492" stroke="#778899" stroke-dasharray="3 3"/><path d="M396.5 124V492" stroke="#778899" stroke-dasharray="3 3"/><path d="M428.5 124V492" stroke="#778899" stroke-dasharray="3 3"/><path d="M460.5 124V492" stroke="#778899" stroke-dasharray="3 3"/><path d="M492.5 124V492" stroke="#778899" stroke-dasharray="3 3"/><path d="M141 203.5H520" stroke="#778899"/><path d="M144.5 347V394" stroke="#00ff00"/><rect x="143.5" y="350.5" width="2" height="24" fill="#fff" stroke="#00ff00"/><path d="M148.5 370V433" stroke="#00ff00"/><rect x="147.5" y="375.5" width="2" height="36" fill="#fff" stroke="#00ff00"/><path d="M152.5 390V426" stroke="#00ff00"/><rect x="151.5" y="409.5" width="2" height="3" fill="#000" stroke="#00ff00"/><path d="M156.5 381V427" stroke="#00ff00"/><rect x="155.5" y="409.5" width="2" height="10" fill="#fff" stroke="#00ff00"/><path d="M160.5 392V440" stroke="#00ff00"/><rect x="159.5" y="417.5" width="2" height="2" fill="#000" stroke="#00ff00"/><path d="M164.5 385V437" stroke="#00ff00"/><path d="M163.0 417.5H166.0" stroke="#00ff00"/><path d="M168.5 376V427" stroke="#00ff00"/><path d="M167.0 416.5H170.0" stroke="#00ff00"/><path d="M172.5 345V427" stroke="#00ff00"/><rect x="171.5" y="355.5" width="2" height="62" fill="#000" stroke="#00ff00"/><path d="M176.5 344V372" stroke="#00ff00"/><rect x="175.5" y="355.5" width="2" height="4" fill="#fff" stroke="#00ff00"/><path d="M180.5 301V365" stroke="#00ff00"/><rect x="179.5" y="319.5" width="2" height="43" fill="#000" stroke="#00ff00"/><path d="M184.5 315V359" stroke="#00ff00"/><rect x="183.5" y="319.5" width="2" height="32" fill="#fff" stroke="#00ff00"/><path d="M188.5 332V360" stroke="#00ff00"/><rect x="187.5" y="346.5" width="2" height="5" fill="#000" stroke="#00ff00"/><path d="M192.5 332V355" stroke="#00ff00"/><rect x="191.5" y="335.5" width="2" height="10" fill="#000" stroke="#00ff00"/><path d="M196.5 327V348" stroke="#00ff00"/><path d="M195.0 342.5H198.0" stroke="#00ff00"/><path d="M200.5 331V344" stroke="#00ff00"/><rect x="199.5" y="337.5" width="2" height="2" fill="#000" stroke="#00ff00"/><path d="M204.5 325V343" stroke="#00ff00"/><rect x="203.5" y="333.5" width="2" height="3" fill="#000" stroke="#00ff00"/><path d="M208.5 331V358" stroke="#00ff00"/><rect x="207.5" y="334.5" width="2" height="14" fill="#fff" stroke="#00ff00"/><path d="M212.5 332V361" stroke="#00ff00"/><path d="M211.0 348.5H214.0" stroke="#00ff00"/><path d="M216.5 338V359" stroke="#00ff00"/><rect x="215.5" y="349.5" width="2" height="2" fill="#fff" stroke="#00ff00"/><path d="M220.5 343V362" stroke="#00ff00"/><rect x="219.5" y="351.5" width="2" height="4" fill="#fff" stroke="#00ff00"/><path d="M224.5 345V363" stroke="#00ff00"/><rect x="223.5" y="348.5" width="2" height="7" fill="#000" stroke="#00ff00"/><path d="M228.5 338V358" stroke="#00ff00"/><path d="M227.0 348.5H230.0" stroke="#00ff00"/><path d="M232.5 320V357" stroke="#00ff00"/><rect x="231.5" y="327.5" width="2" height="20" fill="#000" stroke="#00ff00"/><path d="M236.5 303V334" stroke="#00ff00"/><path d="M235.0 327.5H238.0" stroke="#00ff00"/><path d="M240.5 321V387" stroke="#00ff00"/><rect x="239.5" y="325.5" width="2" height="53" fill="#fff" stroke="#00ff00"/><path d="M244.5 376V420" stroke="#00ff00"/><rect x="243.5" y="378.5" width="2" height="29" fill="#fff" stroke="#00ff00"/><path d="M248.5 386V419" stroke="#00ff00"/><path d="M247.0 407.5H250.0" stroke="#00ff00"/><path d="M252.5 404V448" stroke="#00ff00"/><rect x="251.5" y="404.5" width="2" height="33" fill="#fff" stroke="#00ff00"/><path d="M256.5 417V448" stroke="#00ff00"/><rect x="255.5" y="424.5" width="2" height="15" fill="#000" stroke="#00ff00"/><path d="M260.5 416V442" stroke="#00ff00"/><rect x="259.5" y="424.5" width="2" height="6" fill="#fff" stroke="#00ff00"/><path d="M264.5 421V480" stroke="#00ff00"/><rect x="263.5" y="429.5" width="2" height="40" fill="#fff" stroke="#00ff00"/><path d="M268.5 457V486" stroke="#00ff00"/><path d="M267.0 469.5H270.0" stroke="#00ff00"/><path d="M272.5 451V480" stroke="#00ff00"/><rect x="271.5" y="466.5" width="2" height="5" fill="#000" stroke="#00ff00"/><path d="M276.5 446V475" stroke="#00ff00"/><rect x="275.5" y="449.5" width="2" height="17" fill="#000" stroke="#00ff00"/><path d="M280.5 446V467" stroke="#00ff00"/><rect x="279.5" y="450.5" width="2" height="9" fill="#fff" stroke="#00ff00"/><path d="M284.5 427V463" stroke="#00ff00"/><rect x="283.5" y="450.5" width="2" height="9" fill="#000" stroke="#00ff00"/><path d="M288.5 422V453" stroke="#00ff00"/><rect x="287.5" y="434.5" width="2" height="16" fill="#000" stroke="#00ff00"/><path d="M292.5 426V445" stroke="#00ff00"/><rect x="291.5" y="431.5" width="2" height="3" fill="#000" stroke="#00ff00"/><path d="M296.5 426V478" stroke="#00ff00"/><rect x="295.5" y="431.5" width="2" height="43" fill="#fff" stroke="#00ff00"/><path d="M300.5 437V478" stroke="#00ff00"/><rect x="299.5" y="441.5" width="2" height="33" fill="#000" stroke="#00ff00"/><path d="M304.5 422V445" stroke="#00ff00"/><rect x="303.5" y="428.5" width="2" height="13" fill="#000" stroke="#00ff00"/><path d="M308.5 422V435" stroke="#00ff00"/><path d="M307.0 427.5H310.0" stroke="#00ff00"/><path d="M312.5 415V440" stroke="#00ff00"/><rect x="311.5" y="425.5" width="2" height="12" fill="#fff" stroke="#00ff00"/><path d="M316.5 424V450" stroke="#00ff00"/><rect x="315.5" y="437.5" width="2" height="6" fill="#fff" stroke="#00ff00"/><path d="M320.5 436V453" stroke="#00ff00"/><rect x="319.5" y="443.5" width="2" height="5" fill="#fff" stroke="#00ff00"/><path d="M324.5 422V452" stroke="#00ff00"/><rect x="323.5" y="442.5" width="2" height="7" fill="#000" stroke="#00ff00"/><path d="M328.5 402V453" stroke="#00ff00"/><rect x="327.5" y="414.5" width="2" height="28" fill="#000" stroke="#00ff00"/><path d="M332.5 395V424" stroke="#00ff00"/><rect x="331.5" y="403.5" width="2" height="12" fill="#000" stroke="#00ff00"/><path d="M336.5 354V407" stroke="#00ff00"/><rect x="335.5" y="368.5" width="2" height="35" fill="#000" stroke="#00ff00"/><path d="M340.5 327V383" stroke="#00ff00"/><rect x="339.5" y="330.5" width="2" height="38" fill="#000" stroke="#00ff00"/><path d="M344.5 324V364" stroke="#00ff00"/><rect x="343.5" y="330.5" width="2" height="31" fill="#fff" stroke="#00ff00"/><path d="M348.5 318V369" stroke="#00ff00"/><rect x="347.5" y="342.5" width="2" height="19" fill="#000" stroke="#00ff00"/><path d="M352.5 336V411" stroke="#00ff00"/><rect x="351.5" y="343.5" width="2" height="65" fill="#fff" stroke="#00ff00"/><path d="M356.5 365V412" stroke="#00ff00"/><rect x="355.5" y="367.5" width="2" height="41" fill="#000" stroke="#00ff00"/><path d="M360.5 365V389" stroke="#00ff00"/><rect x="359.5" y="367.5" width="2" height="10" fill="#fff" stroke="#00ff00"/><path d="M364.5 352V386" stroke="#00ff00"/><rect x="363.5" y="357.5" width="2" height="20" fill="#000" stroke="#00ff00"/><path d="M368.5 346V366" stroke="#00ff00"/><path d="M367.0 357.5H370.0" stroke="#00ff00"/><path d="M372.5 342V365" stroke="#00ff00"/><rect x="371.5" y="343.5" width="2" height="14" fill="#000" stroke="#00ff00"/><path d="M376.5 340V359" stroke="#00ff00"/><rect x="375.5" y="343.5" width="2" height="14" fill="#fff" stroke="#00ff00"/><path d="M380.5 351V365" stroke="#00ff00"/><rect x="379.5" y="355.5" width="2" height="3" fill="#fff" stroke="#00ff00"/><path d="M384.5 339V361" stroke="#00ff00"/><rect x="383.5" y="345.5" width="2" height="12" fill="#000" stroke="#00ff00"/><path d="M388.5 321V349" stroke="#00ff00"/><rect x="387.5" y="327.5" width="2" height="18" fill="#000" stroke="#00ff00"/><path d="M392.5 309V331" stroke="#00ff00"/><path d="M391.0 327.5H394.0" stroke="#00ff00"/><path d="M396.5 321V350" stroke="#00ff00"/><rect x="395.5" y="327.5" width="2" height="21" fill="#fff" stroke="#00ff00"/><path d="M400.5 337V352" stroke="#00ff00"/><rect x="399.5" y="342.5" width="2" height="6" fill="#000" stroke="#00ff00"/><path d="M404.5 328V345" stroke="#00ff00"/><rect x="403.5" y="333.5" width="2" height="9" fill="#000" stroke="#00ff00"/><path d="M408.5 325V340" stroke="#00ff00"/><rect x="407.5" y="328.5" width="2" height="5" fill="#000" stroke="#00ff00"/><path d="M412.5 325V346" stroke="#00ff00"/><rect x="411.5" y="328.5" width="2" height="11" fill="#fff" stroke="#00ff00"/><path d="M416.5 313V356" stroke="#00ff00"/><rect x="415.5" y="316.5" width="2" height="23" fill="#000" stroke="#00ff00"/><path d="M420.5 309V344" stroke="#00ff00"/><rect x="419.5" y="315.5" width="2" height="3" fill="#000" stroke="#00ff00"/><path d="M424.5 304V326" stroke="#00ff00"/><rect x="423.5" y="310.5" width="2" height="7" fill="#000" stroke="#00ff00"/><path d="M428.5 274V316" stroke="#00ff00"/><rect x="427.5" y="287.5" width="2" height="23" fill="#000" stroke="#00ff00"/><path d="M432.5 271V298" stroke="#00ff00"/><rect x="431.5" y="275.5" width="2" height="12" fill="#000" stroke="#00ff00"/><path d="M436.5 233V282" stroke="#00ff00"/><rect x="435.5" y="250.5" width="2" height="25" fill="#000" stroke="#00ff00"/><path d="M440.5 244V273" stroke="#00ff00"/><rect x="439.5" y="250.5" width="2" height="11" fill="#fff" stroke="#00ff00"/><path d="M444.5 203V288" stroke="#00ff00"/><rect x="443.5" y="210.5" width="2" height="51" fill="#000" stroke="#00ff00"/><path d="M448.5 163V217" stroke="#00ff00"/><rect x="447.5" y="194.5" width="2" height="16" fill="#000" stroke="#00ff00"/><path d="M452.5 166V232" stroke="#00ff00"/><rect x="451.5" y="194.5" width="2" height="36" fill="#fff" stroke="#00ff00"/><path d="M456.5 166V247" stroke="#00ff00"/><rect x="455.5" y="178.5" width="2" height="52" fill="#000" stroke="#00ff00"/><path d="M460.5 168V192" stroke="#00ff00"/><rect x="459.5" y="170.5" width="2" height="8" fill="#000" stroke="#00ff00"/><path d="M464.5 158V184" stroke="#00ff00"/><rect x="463.5" y="168.5" width="2" height="12" fill="#fff" stroke="#00ff00"/><path d="M468.5 161V184" stroke="#00ff00"/><rect x="467.5" y="173.5" width="2" height="5" fill="#fff" stroke="#00ff00"/><path d="M472.5 161V181" stroke="#00ff00"/><rect x="471.5" y="163.5" width="2" height="8" fill="#000" stroke="#00ff00"/><path d="M476.5 163V174" stroke="#00ff00"/><rect x="475.5" y="165.5" width="2" height="5" fill="#fff" stroke="#00ff00"/><path d="M480.5 160V176" stroke="#00ff00"/><rect x="479.5" y="161.5" width="2" height="9" fill="#fff" stroke="#00ff00"/><path d="M484.5 158V172" stroke="#00ff00"/><rect x="483.5" y="160.5" width="2" height="8" fill="#000" stroke="#00ff00"/><path d="M488.5 152V181" stroke="#00ff00"/><rect x="487.5" y="168.5" width="2" height="8" fill="#fff" stroke="#00ff00"/><path d="M492.5 148V181" stroke="#00ff00"/><rect x="491.5" y="158.5" width="2" height="18" fill="#000" stroke="#00ff00"/><path d="M496.5 135V167" stroke="#00ff00"/><rect x="495.5" y="156.5" width="2" height="2" fill="#000" stroke="#00ff00"/><path d="M500.5 155V206" stroke="#00ff00"/><rect x="499.5" y="156.5" width="2" height="42" fill="#fff" stroke="#00ff00"/><path d="M504.5 178V201" stroke="#00ff00"/><rect x="503.5" y="185.5" width="2" height="14" fill="#000" stroke="#00ff00"/><path d="M508.5 176V196" stroke="#00ff00"/><rect x="507.5" y="186.5" width="2" height="5" fill="#fff" stroke="#00ff00"/><path d="M512.5 190V214" stroke="#00ff00"/><rect x="511.5" y="191.5" width="2" height="13" fill="#fff" stroke="#00ff00"/><path d="M141.5 349V386" stroke="#00ff00"/><path d="M140.5 123 V492.5 H520.5 V123.5 H140" fill="none" stroke="#fff"/><path d="M520 143.5h4" stroke="#fff"/><text x="526" y="147" font-family="Liberation Sans" font-size="10" letter-spacing="-0.4" fill="#fff">1.17510</text><path d="M520 175.5h4" stroke="#fff"/><text x="526" y="179" font-family="Liberation Sans" font-size="10" letter-spacing="-0.4" fill="#fff">1.17380</text><path d="M520 238.5h4" stroke="#fff"/><text x="526" y="242" font-family="Liberation Sans" font-size="10" letter-spacing="-0.4" fill="#fff">1.17120</text><path d="M520 270.5h4" stroke="#fff"/><text x="526" y="274" font-family="Liberation Sans" font-size="10" letter-spacing="-0.4" fill="#fff">1.16990</text><path d="M520 301.5h4" stroke="#fff"/><text x="526" y="305" font-family="Liberation Sans" font-size="10" letter-spacing="-0.4" fill="#fff">1.16860</text><path d="M520 333.5h4" stroke="#fff"/><text x="526" y="337" font-family="Liberation Sans" font-size="10" letter-spacing="-0.4" fill="#fff">1.16730</text><path d="M520 365.5h4" stroke="#fff"/><text x="526" y="369" font-family="Liberation Sans" font-size="10" letter-spacing="-0.4" fill="#fff">1.16600</text><path d="M520 397.5h4" stroke="#fff"/><text x="526" y="401" font-family="Liberation Sans" font-size="10" letter-spacing="-0.4" fill="#fff">1.16470</text><path d="M520 428.5h4" stroke="#fff"/><text x="526" y="432" font-family="Liberation Sans" font-size="10" letter-spacing="-0.4" fill="#fff">1.16340</text><path d="M520 460.5h4" stroke="#fff"/><text x="526" y="464" font-family="Liberation Sans" font-size="10" letter-spacing="-0.4" fill="#fff">1.16210</text><rect x="521" y="197" width="41" height="12" fill="#778899"/><text x="525" y="207" font-family="Liberation Sans" font-size="10" letter-spacing="-0.4" fill="#fff">1.17261</text><path d="M140.5 492V497" stroke="#fff"/><text x="140" y="505" font-family="Liberation Sans" font-size="10" letter-spacing="-0.5" fill="#fff">24 Sep 2020</text><path d="M204.5 492V497" stroke="#fff"/><text x="204" y="505" font-family="Liberation Sans" font-size="10" letter-spacing="-0.5" fill="#fff">24 Sep 23:00</text><path d="M268.5 492V497" stroke="#fff"/><text x="268" y="505" font-family="Liberation Sans" font-size="10" letter-spacing="-0.5" fill="#fff">25 Sep 15:00</text><path d="M332.5 492V497" stroke="#fff"/><text x="332" y="505" font-family="Liberation Sans" font-size="10" letter-spacing="-0.5" fill="#fff">28 Sep 09:00</text><path d="M396.5 492V497" stroke="#fff"/><text x="396" y="505" font-family="Liberation Sans" font-size="10" letter-spacing="-0.5" fill="#fff">29 Sep 01:00</text><path d="M460.5 492V497" stroke="#fff"/><text x="460" y="505" font-family="Liberation Sans" font-size="10" letter-spacing="-0.5" fill="#fff">29 Sep 17:00</text><text x="145" y="134" font-family="Liberation Sans" font-size="10" letter-spacing="-0.25" fill="#fff" xml:space="preserve">EURUSD, H1:  Euro vs US Dollar</text></svg>
<div class="a" style="left:580px;top:140px;width:336px;height:373px;background:#fff;border:1px solid #898c95"></div>
<div class="a" style="left:582px;top:122px;width:48px;height:19px;background:linear-gradient(#f2f2f2,#e4e4e4 50%,#d6d6d6);border:1px solid #898c95;border-bottom:none"></div>
<div class="a t" style="left:587px;top:126px;font-size:12px;font-weight:500">普通</div>
<div class="a" style="left:630px;top:122px;width:41px;height:19px;background:linear-gradient(#f2f2f2,#e4e4e4 50%,#d6d6d6);border:1px solid #898c95;border-bottom:none"></div>
<div class="a t" style="left:635px;top:126px;font-size:12px;font-weight:500">显示</div>
<div class="a" style="left:676px;top:120px;width:52px;height:21px;background:#fff;border:1px solid #898c95;border-bottom:none"></div>
<div class="a t" style="left:684px;top:124px;font-size:12px;font-weight:500">颜色</div>
<div class="a t" style="right:328px;top:154px;font-size:12px;font-weight:500;color:#000">方案<span style="margin-left:1.5px">:</span></div>
<div class="a" style="left:734px;top:150px;width:165px;height:20px;border:1px solid #707070;border-radius:3px;background:linear-gradient(#f2f2f2,#ebebeb 50%,#dddddd 51%,#cfcfcf)"></div>
<div class="a" style="left:737px;top:153px;width:143px;height:14px;border:1px dotted #000"></div>
<div class="a t" style="left:737px;top:155px;font-family:'Liberation Mono',monospace;font-size:11px;letter-spacing:-0.6px;-webkit-text-stroke:0.25px #000">Green on Black</div>
<svg class="a" style="left:887px;top:159px" width="9" height="5"><path d="M0 0h7.5l-3.75 4z" fill="#000"/></svg>
<div class="a t" style="right:328px;top:179px;font-size:12px;font-weight:500;color:#000">背景色<span style="margin-left:1.5px">:</span></div>
<div class="a" style="left:734px;top:175px;width:165px;height:20px;border:1px solid #7eb4ea;border-top-color:#5c9ad8;border-radius:2px;background:#fff"></div>
<div class="a" style="left:882px;top:176px;width:16px;height:18px;background:linear-gradient(#eaf6fd,#bee6fd);border-left:1px solid #3c7fb1"></div>
<div class="a" style="left:738px;top:180px;width:13px;height:12px;background:#000000;border:1px solid #808080"></div>
<div class="a t" style="left:756px;top:181px;font-family:'Liberation Mono',monospace;font-size:11px;letter-spacing:-0.6px;-webkit-text-stroke:0.25px #000">Black</div>
<svg class="a" style="left:887px;top:184px" width="9" height="5"><path d="M0 0h7.5l-3.75 4z" fill="#000"/></svg>
<div class="a t" style="right:328px;top:205px;font-size:12px;font-weight:500;color:#000">前景色<span style="margin-left:1.5px">:</span></div>
<div class="a" style="left:734px;top:201px;width:165px;height:20px;border:1px solid #d8dce2;border-top-color:#a8a8a8;border-radius:2px;background:#fff"></div>
<div class="a" style="left:738px;top:206px;width:13px;height:12px;background:#ffffff;border:1px solid #808080"></div>
<div class="a t" style="left:756px;top:207px;font-family:'Liberation Mono',monospace;font-size:11px;letter-spacing:-0.6px;-webkit-text-stroke:0.25px #000">White</div>
<svg class="a" style="left:887px;top:210px" width="9" height="5"><path d="M0 0h7.5l-3.75 4z" fill="#000"/></svg>
<div class="a t" style="right:328px;top:230px;font-size:12px;font-weight:500;color:#000">网格<span style="margin-left:1.5px">:</span></div>
<div class="a" style="left:734px;top:226px;width:165px;height:20px;border:1px solid #d8dce2;border-top-color:#a8a8a8;border-radius:2px;background:#fff"></div>
<div class="a" style="left:738px;top:231px;width:13px;height:12px;background:#778899;border:1px solid #808080"></div>
<div class="a t" style="left:756px;top:232px;font-family:'Liberation Mono',monospace;font-size:11px;letter-spacing:-0.6px;-webkit-text-stroke:0.25px #000">LightSlateGray</div>
<svg class="a" style="left:887px;top:235px" width="9" height="5"><path d="M0 0h7.5l-3.75 4z" fill="#000"/></svg>
<div class="a t" style="right:328px;top:256px;font-size:12px;font-weight:500;color:#000">图表上<span style="margin-left:1.5px">:</span></div>
<div class="a" style="left:734px;top:252px;width:165px;height:20px;border:1px solid #d8dce2;border-top-color:#a8a8a8;border-radius:2px;background:#fff"></div>
<div class="a" style="left:738px;top:257px;width:13px;height:12px;background:#00ff00;border:1px solid #808080"></div>
<div class="a t" style="left:756px;top:258px;font-family:'Liberation Mono',monospace;font-size:11px;letter-spacing:-0.6px;-webkit-text-stroke:0.25px #000">Lime</div>
<svg class="a" style="left:887px;top:261px" width="9" height="5"><path d="M0 0h7.5l-3.75 4z" fill="#000"/></svg>
<div class="a t" style="right:328px;top:281px;font-size:12px;font-weight:500;color:#000">图表下<span style="margin-left:1.5px">:</span></div>
<div class="a" style="left:734px;top:277px;width:165px;height:20px;border:1px solid #d8dce2;border-top-color:#a8a8a8;border-radius:2px;background:#fff"></div>
<div class="a" style="left:738px;top:282px;width:13px;height:12px;background:#00ff00;border:1px solid #808080"></div>
<div class="a t" style="left:756px;top:283px;font-family:'Liberation Mono',monospace;font-size:11px;letter-spacing:-0.6px;-webkit-text-stroke:0.25px #000">Lime</div>
<svg class="a" style="left:887px;top:286px" width="9" height="5"><path d="M0 0h7.5l-3.75 4z" fill="#000"/></svg>
<div class="a t" style="right:328px;top:307px;font-size:12px;font-weight:500;color:#000">阳烛<span style="margin-left:1.5px">:</span></div>
<div class="a" style="left:734px;top:303px;width:165px;height:20px;border:1px solid #d8dce2;border-top-color:#a8a8a8;border-radius:2px;background:#fff"></div>
<div class="a" style="left:738px;top:308px;width:13px;height:12px;background:#000000;border:1px solid #808080"></div>
<div class="a t" style="left:756px;top:309px;font-family:'Liberation Mono',monospace;font-size:11px;letter-spacing:-0.6px;-webkit-text-stroke:0.25px #000">Black</div>
<svg class="a" style="left:887px;top:312px" width="9" height="5"><path d="M0 0h7.5l-3.75 4z" fill="#000"/></svg>
<div class="a t" style="right:328px;top:332px;font-size:12px;font-weight:500;color:#000">阴烛<span style="margin-left:1.5px">:</span></div>
<div class="a" style="left:734px;top:328px;width:165px;height:20px;border:1px solid #d8dce2;border-top-color:#a8a8a8;border-radius:2px;background:#fff"></div>
<div class="a" style="left:738px;top:333px;width:13px;height:12px;background:#ffffff;border:1px solid #808080"></div>
<div class="a t" style="left:756px;top:334px;font-family:'Liberation Mono',monospace;font-size:11px;letter-spacing:-0.6px;-webkit-text-stroke:0.25px #000">White</div>
<svg class="a" style="left:887px;top:337px" width="9" height="5"><path d="M0 0h7.5l-3.75 4z" fill="#000"/></svg>
<div class="a t" style="right:328px;top:358px;font-size:12px;font-weight:500;color:#000">线图<span style="margin-left:1.5px">:</span></div>
<div class="a" style="left:734px;top:354px;width:165px;height:20px;border:1px solid #d8dce2;border-top-color:#a8a8a8;border-radius:2px;background:#fff"></div>
<div class="a" style="left:738px;top:359px;width:13px;height:12px;background:#00ff00;border:1px solid #808080"></div>
<div class="a t" style="left:756px;top:360px;font-family:'Liberation Mono',monospace;font-size:11px;letter-spacing:-0.6px;-webkit-text-stroke:0.25px #000">Lime</div>
<svg class="a" style="left:887px;top:363px" width="9" height="5"><path d="M0 0h7.5l-3.75 4z" fill="#000"/></svg>
<div class="a t" style="right:328px;top:383px;font-size:12px;font-weight:500;color:#000">交易量<span style="margin-left:1.5px">:</span></div>
<div class="a" style="left:734px;top:379px;width:165px;height:20px;border:1px solid #d8dce2;border-top-color:#a8a8a8;border-radius:2px;background:#fff"></div>
<div class="a" style="left:738px;top:384px;width:13px;height:12px;background:#32cd32;border:1px solid #808080"></div>
<div class="a t" style="left:756px;top:385px;font-family:'Liberation Mono',monospace;font-size:11px;letter-spacing:-0.6px;-webkit-text-stroke:0.25px #000">LimeGreen</div>
<svg class="a" style="left:887px;top:388px" width="9" height="5"><path d="M0 0h7.5l-3.75 4z" fill="#000"/></svg>
<div class="a t" style="right:328px;top:408px;font-size:12px;font-weight:500;color:#000">卖价线<span style="margin-left:1.5px">:</span></div>
<div class="a" style="left:734px;top:404px;width:165px;height:20px;border:1px solid #d8dce2;border-top-color:#a8a8a8;border-radius:2px;background:#fff"></div>
<div class="a" style="left:738px;top:409px;width:13px;height:12px;background:#778899;border:1px solid #808080"></div>
<div class="a t" style="left:756px;top:410px;font-family:'Liberation Mono',monospace;font-size:11px;letter-spacing:-0.6px;-webkit-text-stroke:0.25px #000">LightSlateGray</div>
<svg class="a" style="left:887px;top:413px" width="9" height="5"><path d="M0 0h7.5l-3.75 4z" fill="#000"/></svg>
<div class="a t" style="right:328px;top:434px;font-size:12px;font-weight:500;color:#000">买价线<span style="margin-left:1.5px">:</span></div>
<div class="a" style="left:734px;top:430px;width:165px;height:20px;border:1px solid #d8dce2;border-top-color:#a8a8a8;border-radius:2px;background:#fff"></div>
<div class="a" style="left:738px;top:435px;width:13px;height:12px;background:#ff0000;border:1px solid #808080"></div>
<div class="a t" style="left:756px;top:436px;font-family:'Liberation Mono',monospace;font-size:11px;letter-spacing:-0.6px;-webkit-text-stroke:0.25px #000">Red</div>
<svg class="a" style="left:887px;top:439px" width="9" height="5"><path d="M0 0h7.5l-3.75 4z" fill="#000"/></svg>
<div class="a t" style="right:328px;top:459px;font-size:12px;font-weight:500;color:#000">最后价线<span style="margin-left:1.5px">:</span></div>
<div class="a" style="left:734px;top:455px;width:165px;height:20px;border:1px solid #d8dce2;border-top-color:#a8a8a8;border-radius:2px;background:#fff"></div>
<div class="a" style="left:738px;top:460px;width:13px;height:12px;background:#00c000;border:1px solid #808080"></div>
<div class="a t" style="left:756px;top:461px;font-family:'Liberation Mono',monospace;font-size:11px;letter-spacing:-0.6px;-webkit-text-stroke:0.25px #000">0,192,0</div>
<svg class="a" style="left:887px;top:464px" width="9" height="5"><path d="M0 0h7.5l-3.75 4z" fill="#000"/></svg>
<div class="a t" style="right:328px;top:485px;font-size:12px;font-weight:500;color:#000">停损级别<span style="margin-left:1.5px">:</span></div>
<div class="a" style="left:734px;top:481px;width:165px;height:20px;border:1px solid #d8dce2;border-top-color:#a8a8a8;border-radius:2px;background:#fff"></div>
<div class="a" style="left:738px;top:486px;width:13px;height:12px;background:#ff0000;border:1px solid #808080"></div>
<div class="a t" style="left:756px;top:487px;font-family:'Liberation Mono',monospace;font-size:11px;letter-spacing:-0.6px;-webkit-text-stroke:0.25px #000">Red</div>
<svg class="a" style="left:887px;top:490px" width="9" height="5"><path d="M0 0h7.5l-3.75 4z" fill="#000"/></svg>
<div class="a" style="left:670px;top:113px;width:239px;height:398px;border:3px solid #ee3434"></div>
<div class="a" style="left:682px;top:521px;width:73px;height:19px;border:1px solid #3c7fb1;border-radius:3px;background:linear-gradient(#eaf6fd,#d9f0fc 50%,#bee6fd 51%,#a7d9f5)"></div>
<div class="a t" style="left:706px;top:525px;font-size:12px;font-weight:500">确定</div>
<div class="a" style="left:763px;top:521px;width:73px;height:19px;border:1px solid #707070;border-radius:3px;background:linear-gradient(#f2f2f2,#ebebeb 50%,#dddddd 51%,#cfcfcf)"></div>
<div class="a t" style="left:786px;top:525px;font-size:12px;font-weight:500">取消</div>
<div class="a" style="left:844px;top:521px;width:73px;height:19px;border:1px solid #707070;border-radius:3px;background:linear-gradient(#f2f2f2,#ebebeb 50%,#dddddd 51%,#cfcfcf)"></div>
<div class="a t" style="left:867px;top:525px;font-size:12px;font-weight:500">帮助</div>
</body></html>
